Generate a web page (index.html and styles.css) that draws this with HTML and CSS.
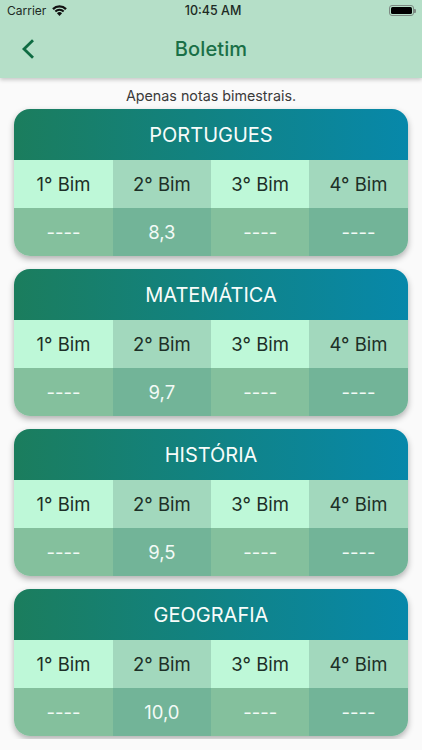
FILE: index.html
```html
<!DOCTYPE html>
<html lang="pt">
<head>
<meta charset="utf-8">
<title>Boletim</title>
<link rel="stylesheet" href="styles.css">
</head>
<body>
<header class="appbar">
  <div class="status">
    <div class="status-left">
      <span>Carrier</span>
      <svg class="wifi" viewBox="0 0 16 12" width="15" height="11"><path d="M8 12 5.2 9a3.9 3.9 0 0 1 5.6 0Z"/><path d="M4.2 8 2.7 6.4a7.4 7.4 0 0 1 10.6 0L11.8 8a5.2 5.2 0 0 0-7.6 0Z"/><path d="M1.8 5.4 0 3.6a11.2 11.2 0 0 1 16 0l-1.8 1.8a8.8 8.8 0 0 0-12.4 0Z"/></svg>
    </div>
    <span class="clock">10:45 AM</span>
    <div class="battery"><span class="battery-fill"></span></div>
  </div>
  <div class="nav">
    <svg class="back" viewBox="0 0 14 20" width="14" height="20"><path d="M12 1.2 3 10l9 8.8" fill="none" stroke="#0f6b42" stroke-width="2.8"/></svg>
    <h1>Boletim</h1>
  </div>
</header>
<main class="content">
  <p class="note">Apenas notas bimestrais.</p>
  <section class="card">
    <h2>PORTUGUES</h2>
    <div class="row labels"><span>1° Bim</span><span>2° Bim</span><span>3° Bim</span><span>4° Bim</span></div>
    <div class="row grades"><span>----</span><span>8,3</span><span>----</span><span>----</span></div>
  </section>
  <section class="card">
    <h2>MATEMÁTICA</h2>
    <div class="row labels"><span>1° Bim</span><span>2° Bim</span><span>3° Bim</span><span>4° Bim</span></div>
    <div class="row grades"><span>----</span><span>9,7</span><span>----</span><span>----</span></div>
  </section>
  <section class="card">
    <h2>HISTÓRIA</h2>
    <div class="row labels"><span>1° Bim</span><span>2° Bim</span><span>3° Bim</span><span>4° Bim</span></div>
    <div class="row grades"><span>----</span><span>9,5</span><span>----</span><span>----</span></div>
  </section>
  <section class="card">
    <h2>GEOGRAFIA</h2>
    <div class="row labels"><span>1° Bim</span><span>2° Bim</span><span>3° Bim</span><span>4° Bim</span></div>
    <div class="row grades"><span>----</span><span>10,0</span><span>----</span><span>----</span></div>
  </section>
</main>
</body>
</html>
```
FILE: styles.css
```css
* { box-sizing: border-box; margin: 0; padding: 0; }
html, body { height: 100%; }
body {
  width: 422px;
  height: 750px;
  overflow: hidden;
  background: #fafafa;
  font-family: Inter, Roboto, sans-serif;
  display: flex;
  flex-direction: column;
}
.appbar {
  height: 78px;
  background: #b5dfc8;
  box-shadow: 0 2px 4px rgba(0,0,0,.2);
  position: relative;
  z-index: 1;
  flex: none;
}
.status {
  height: 20px;
  padding: 0 7px;
  display: grid;
  grid-template-columns: 1fr auto 1fr;
  align-items: center;
  font-size: 12px;
  color: #1d2a24;
}
.status-left { display: flex; align-items: center; gap: 6px; }
.wifi { fill: #111; }
.clock { font-weight: 500; font-size: 12.5px; transform: translateX(2px); }
.battery {
  justify-self: end;
  width: 25px;
  height: 11px;
  border: 1px solid #7d8a83;
  border-radius: 3px;
  padding: 1px;
  margin-right: 1px;
  position: relative;
}
.battery::after {
  content: "";
  position: absolute;
  right: -3px;
  top: 3px;
  width: 2px;
  height: 4px;
  background: #7d8a83;
  border-radius: 0 1px 1px 0;
}
.battery-fill { display: block; height: 100%; background: #000; border-radius: 1.5px; }
.nav {
  height: 58px;
  position: relative;
  display: flex;
  align-items: center;
  justify-content: center;
}
.back { position: absolute; left: 21px; top: 19px; }
.nav h1 {
  font-size: 20px;
  font-weight: 500;
  letter-spacing: 0.1px;
  color: #1a6f47;
}
.content { padding: 0 14.4px; flex: none; height: 661px; overflow: hidden; }
.note {
  height: 31px;
  line-height: 36px;
  text-align: center;
  font-size: 14.3px;
  color: #3a3a3a;
}
.card {
  height: 147px;
  margin-bottom: 13px;
  border-radius: 16px;
  overflow: hidden;
  box-shadow: 0 3px 6px rgba(0,0,0,.3);
  display: flex;
  flex-direction: column;
}
.card h2 {
  height: 51px;
  line-height: 52px;
  text-align: center;
  font-size: 20px;
  font-weight: 400;
  color: #f7fcfa;
  background: linear-gradient(90deg, #1b7d5d, #0788aa);
}
.row { height: 48px; display: grid; grid-template-columns: repeat(4, 1fr); }
.row span { display: flex; align-items: center; justify-content: center; }
.labels { font-size: 18.5px; font-weight: 400; color: #1d2f27; }
.labels span:nth-child(odd) { background: #bef8d8; }
.labels span:nth-child(even) { background: #a2d8bd; }
.grades { font-size: 18.5px; color: #f2faf6; }
.grades span:nth-child(odd) { background: #84c09d; }
.grades span:nth-child(even) { background: #72b498; }
```
